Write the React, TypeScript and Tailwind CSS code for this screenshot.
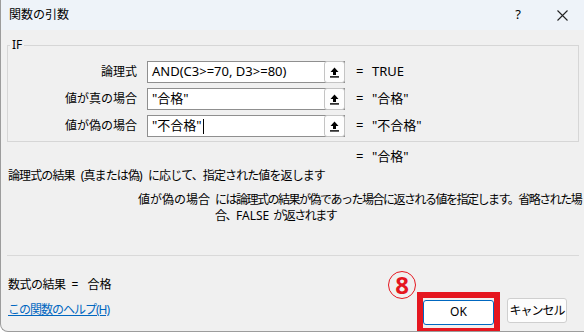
import React from 'react';

const font = { fontFamily: '"Noto Sans", "Noto Sans CJK JP", sans-serif' };

const UploadIcon = () => (
  <svg width="9" height="11" viewBox="0 0 9 11">
    <polygon points="4.5,0.5 8.5,5 6,5 6,8 3,8 3,5 0.5,5" fill="#000" />
    <rect x="0" y="9.2" width="9" height="1.4" fill="#000" />
  </svg>
);

const ArgRow = ({ label, value, result, caret }: { label: string; value: string; result: string; caret?: boolean }) => (
  <div className="flex items-center h-[22px]">
    <div className="w-[130px] text-right text-[12px] text-black pr-px">{label}</div>
    <div className="ml-[9px] w-[198px] h-[22px] flex items-center bg-white border border-[#8f8f8f]">
      <div className="flex-1 pl-[4px] text-[13px] text-black whitespace-nowrap flex items-center">
        {value}
        {caret && <span className="inline-block w-px h-[15px] bg-black ml-[1px]" />}
      </div>
      <button className="w-[21px] h-[22px] -mr-px flex items-center justify-center bg-[#fdfdfd] border border-[#c4c4c4] rounded-[3px]">
        <UploadIcon />
      </button>
    </div>
    <div className="ml-[11px] text-[13px] text-black w-[16px]">=</div>
    <div className="text-[13px] text-black">{result}</div>
  </div>
);

export default function App() {
  return (
    <div
      className="w-[584px] h-[332px] overflow-hidden bg-[#f0f0f0] border-l border-b border-[#9c9c9c] rounded-bl-[8px] flex flex-col text-black"
      style={font}
    >
      {/* タイトルバー */}
      <div className="h-[30px] flex items-center bg-[#eef3f9] shrink-0">
        <div className="pl-[8px] text-[12px]">関数の引数</div>
        <div className="ml-auto text-[13px] mr-[36px]">?</div>
        <svg width="11" height="11" viewBox="0 0 11 11" className="mr-[16px]">
          <path d="M0.5 0.5 L10.5 10.5 M10.5 0.5 L0.5 10.5" stroke="#222" strokeWidth="1.1" />
        </svg>
      </div>

      {/* 引数ボックス */}
      <fieldset className="mt-[7px] ml-[6px] mr-[5px] border border-[#d6d6d6] pb-[4px] shrink-0">
        <legend className="ml-[2px] px-[2px] text-[12px] leading-[16px]">IF</legend>
        <div className="pt-[8px] flex flex-col gap-[5px]">
          <ArgRow label="論理式" value="AND(C3>=70, D3>=80)" result="TRUE" />
          <ArgRow label="値が真の場合" value={'"合格"'} result={'"合格"'} />
          <ArgRow label="値が偽の場合" value={'"不合格"'} result={'"不合格"'} caret />
        </div>
      </fieldset>

      <div className="mt-[7px] h-[16px] flex items-center text-[13px] pl-[355px] shrink-0">
        <span className="w-[16px]">=</span>
        <span>"合格"</span>
      </div>

      <div className="mt-[3px] h-[16px] flex items-center pl-[7px] text-[12px] tracking-[-0.9px] [word-spacing:4px] whitespace-nowrap shrink-0">
        論理式の結果 (真または偽) に応じて、指定された値を返します
      </div>

      <div className="mt-[8px] flex text-[12px] leading-[16px] whitespace-nowrap shrink-0">
        <div className="pl-[137px] w-[214px] shrink-0">値が偽の場合</div>
        <div className="tracking-[-1.5px]">
          には論理式の結果が偽であった場合に返される値を指定します。省略された場
          <br />
          合、<span className="tracking-normal">FALSE</span>
          <span className="ml-[4px]">が返されます</span>
        </div>
      </div>

      <div className="mt-[31px] ml-[6px] mr-[5px] h-px bg-[#d9d9d9] shrink-0" />

      <div className="flex-1 flex justify-between">
        <div className="pl-[7px] pt-[21px] flex flex-col gap-[9px] text-[12px] leading-[16px] whitespace-nowrap">
          <div className="flex">
            <span className="tracking-[-0.5px]">数式の結果</span>
            <span className="ml-[6px]">=</span>
            <span className="ml-[9px]">合格</span>
          </div>
          <a className="text-[#0067c0] underline tracking-[-1px]">この関数のヘルプ(H)</a>
        </div>
        <div className="flex items-start pt-[36px] pr-[17px]">
          <div className="relative border-[6px] border-[#e5161f] pb-[3px]">
            <div className="absolute -left-[35px] -top-[27px] w-[28px] h-[28px] rounded-full border-[1.5px] border-[#e5161f] flex items-center justify-center text-[#e5161f] text-[24px] font-bold leading-none">
              8
            </div>
            <button className="w-[71px] h-[25px] bg-white border border-[#0067c0] rounded-[3px] text-[12px]">OK</button>
          </div>
          <button className="ml-[7px] mt-[6px] w-[60px] h-[25px] bg-[#fdfdfd] border border-[#cfcfcf] rounded-[3px] text-[12px] tracking-[-1px] whitespace-nowrap">
            キャンセル
          </button>
        </div>
      </div>
    </div>
  );
}
